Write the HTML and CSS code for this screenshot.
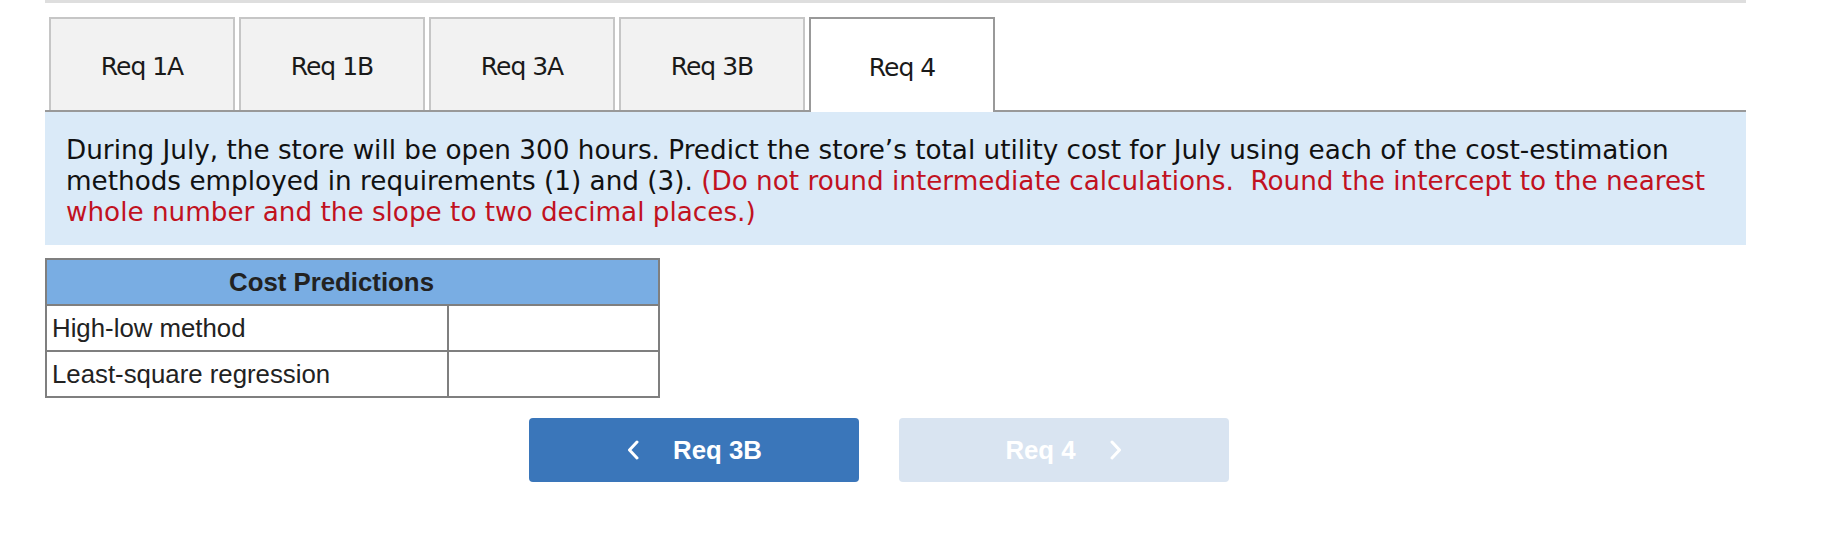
FILE: index.html
```html
<!DOCTYPE html>
<html lang="en">
<head>
<meta charset="utf-8">
<title>Req 4</title>
<link rel="stylesheet" href="styles.css">
</head>
<body>
<div class="page">
  <div class="topline"></div>
  <div class="tabs">
    <div class="tab">Req 1A</div>
    <div class="tab">Req 1B</div>
    <div class="tab">Req 3A</div>
    <div class="tab">Req 3B</div>
    <div class="tab active">Req 4</div>
  </div>
  <div class="question">
    During July, the store will be open 300 hours. Predict the store’s total utility cost for July using each of the cost-estimation methods employed in requirements (1) and (3). <span class="note">(Do not round intermediate calculations.&nbsp; Round the intercept to the nearest whole number and the slope to two decimal places.)</span>
  </div>
  <div class="grid">
    <div class="grid-head">Cost Predictions</div>
    <div class="cell label">High-low method</div>
    <div class="cell input"></div>
    <div class="cell label">Least-square regression</div>
    <div class="cell input"></div>
  </div>
  <div class="nav">
    <div class="btn prev">
      <svg class="chev" width="14" height="20" viewBox="0 0 14 20"><polyline points="11,2 3.5,10 11,18" fill="none" stroke="#fff" stroke-width="3" stroke-linecap="round" stroke-linejoin="round"/></svg>
      <span>Req 3B</span>
    </div>
    <div class="btn next">
      <span>Req 4</span>
      <svg class="chev" width="14" height="20" viewBox="0 0 14 20"><polyline points="3,2 10.5,10 3,18" fill="none" stroke="#fff" stroke-width="3" stroke-linecap="round" stroke-linejoin="round"/></svg>
    </div>
  </div>
</div>
</body>
</html>
```

FILE: styles.css
```css
html, body {
  margin: 0;
  padding: 0;
  background: #ffffff;
}

.page {
  margin-left: 45px;
  width: 1701px;
}

.topline {
  height: 3px;
  background: #dedede;
}

.tabs {
  display: flex;
  gap: 4px;
  margin-top: 14px;
  padding-left: 4px;
  height: 93px;
  border-bottom: 2px solid #999999;
}

.tab {
  box-sizing: border-box;
  width: 186px;
  height: 93px;
  border: 2px solid #c6c6c6;
  border-bottom: none;
  background: #f2f2f2;
  display: flex;
  align-items: center;
  justify-content: center;
  padding-top: 4px;
  font-family: "DejaVu Sans", sans-serif;
  font-size: 25px;
  letter-spacing: -1px;
  color: #1a1a1a;
}

.tab.active {
  height: 95px;
  border-color: #999999;
  background: #ffffff;
  position: relative;
}

.question {
  background: #daeaf8;
  padding: 23px 18px 17px 21px;
  font-family: "DejaVu Sans", sans-serif;
  font-size: 26.25px;
  line-height: 31px;
  color: #111111;
}

.note {
  color: #c1121f;
}

.grid {
  box-sizing: border-box;
  width: 615px;
  margin-top: 13px;
  display: grid;
  grid-template-columns: 400px 209px;
  grid-auto-rows: 44px;
  gap: 2px;
  padding: 2px;
  background: #7f7f7f;
  font-family: "Liberation Sans", Arial, sans-serif;
  font-size: 25.8px;
  color: #222222;
}

.grid-head {
  grid-column: 1 / 3;
  background: #79ade3;
  font-weight: bold;
  display: flex;
  align-items: center;
  justify-content: center;
  padding-right: 42px;
}

.cell {
  background: #ffffff;
  display: flex;
  align-items: center;
}

.cell.label {
  padding-left: 5px;
}

.nav {
  display: flex;
  gap: 40px;
  margin-top: 20px;
  padding-left: 484px;
}

.btn {
  box-sizing: border-box;
  width: 330px;
  height: 64px;
  border-radius: 4px;
  display: flex;
  align-items: center;
  justify-content: center;
  gap: 33px;
  font-family: "Liberation Sans", Arial, sans-serif;
  font-weight: bold;
  font-size: 25.8px;
  color: #ffffff;
}

.btn.prev {
  background: #3a76ba;
}

.btn.next {
  background: #d9e4f1;
}

.chev {
  display: block;
}
```
